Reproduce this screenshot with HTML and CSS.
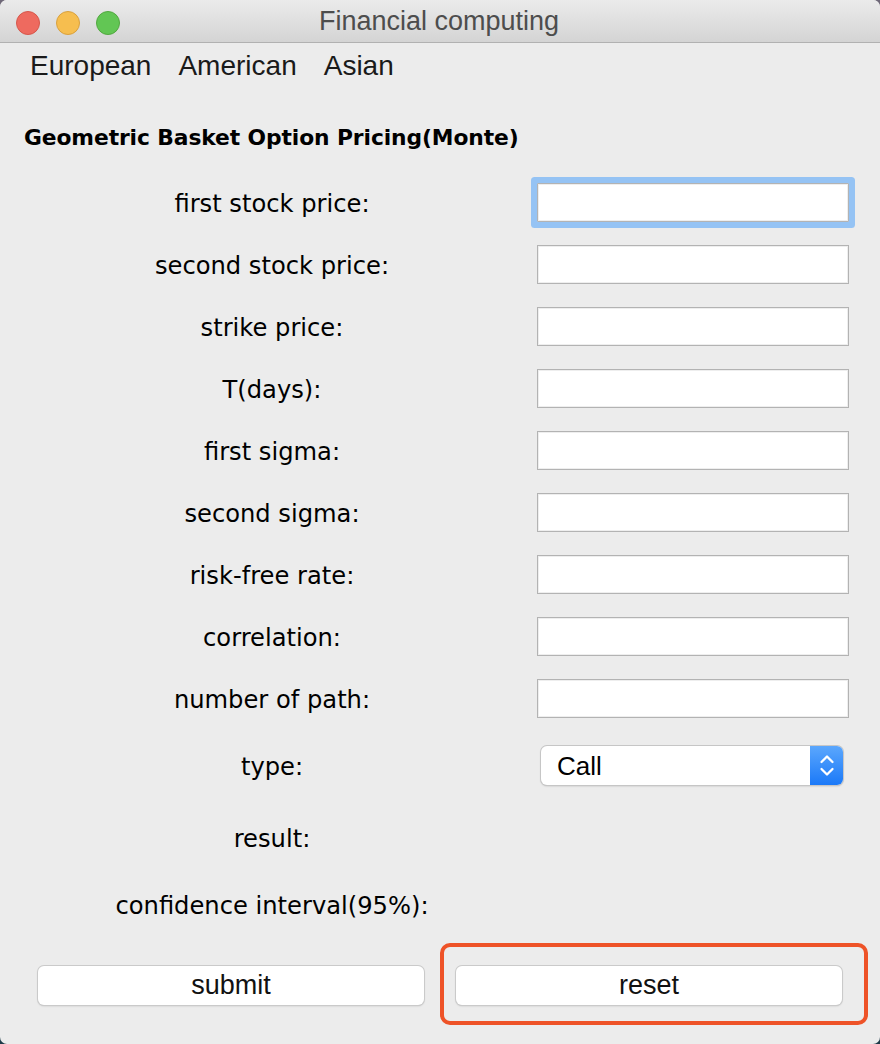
FILE: index.html
```html
<!DOCTYPE html>
<html>
<head>
<meta charset="utf-8">
<title>Financial computing</title>
<link rel="stylesheet" href="styles.css">
</head>
<body>
<div class="window">
  <div class="titlebar">
    <div class="lights">
      <span class="light red"></span>
      <span class="light yellow"></span>
      <span class="light green"></span>
    </div>
    <div class="title">Financial computing</div>
  </div>
  <div class="menubar">
    <span class="menu-item">European</span>
    <span class="menu-item">American</span>
    <span class="menu-item">Asian</span>
  </div>
  <h1 class="heading">Geometric Basket Option Pricing(Monte)</h1>
  <div class="form">
    <div class="row"><label class="label">first stock price:</label><div class="field focus"></div></div>
    <div class="row"><label class="label">second stock price:</label><div class="field"></div></div>
    <div class="row"><label class="label">strike price:</label><div class="field"></div></div>
    <div class="row"><label class="label">T(days):</label><div class="field"></div></div>
    <div class="row"><label class="label">first sigma:</label><div class="field"></div></div>
    <div class="row"><label class="label">second sigma:</label><div class="field"></div></div>
    <div class="row"><label class="label">risk-free rate:</label><div class="field"></div></div>
    <div class="row"><label class="label">correlation:</label><div class="field"></div></div>
    <div class="row"><label class="label">number of path:</label><div class="field"></div></div>
    <div class="row row-type"><label class="label">type:</label>
      <div class="select">
        <span class="select-text">Call</span>
        <span class="select-arrows">
          <svg width="18" height="28" viewBox="0 0 18 28"><path d="M3.5 10 L9 4.5 L14.5 10" fill="none" stroke="#fff" stroke-width="2.3" stroke-linecap="round" stroke-linejoin="round"/><path d="M3.5 17 L9 22.5 L14.5 17" fill="none" stroke="#fff" stroke-width="2.3" stroke-linecap="round" stroke-linejoin="round"/></svg>
        </span>
      </div>
    </div>
    <div class="row row-result"><label class="label">result:</label><div class="value"></div></div>
    <div class="row row-conf"><label class="label">confidence interval(95%):</label><div class="value"></div></div>
  </div>
  <div class="buttons">
    <button class="btn">submit</button>
    <button class="btn">reset</button>
  </div>
  <div class="annotation"></div>
</div>
</body>
</html>
```
FILE: styles.css
```css
html, body {
  margin: 0;
  padding: 0;
}
body {
  width: 880px;
  height: 1044px;
  background: linear-gradient(#6f6878 0%, #6f6878 50%, #1d3a48 50%, #1d3a48 100%);
  overflow: hidden;
}
.window {
  position: relative;
  width: 880px;
  height: 1044px;
  background: #ececec;
  border-radius: 7px;
  overflow: hidden;
  font-family: "Liberation Sans", Arial, sans-serif;
  color: #000;
}
.titlebar {
  position: relative;
  height: 42px;
  background: linear-gradient(#ebebeb, #d4d4d4);
  border-bottom: 1px solid #b1b1b1;
  display: flex;
  align-items: center;
  justify-content: center;
}
.lights {
  position: absolute;
  left: 16px;
  top: 11px;
  display: flex;
  gap: 16px;
}
.light {
  width: 22px;
  height: 22px;
  border-radius: 50%;
  display: block;
}
.red { background: #ee6a5f; border: 1px solid #d6574b; }
.yellow { background: #f6be4f; border: 1px solid #d9a13e; }
.green { background: #62c654; border: 1px solid #52a840; }
.title {
  font-size: 27px;
  color: #4d4d4d;
  margin-left: -2px;
  margin-top: 1px;
}
.menubar {
  display: flex;
  gap: 27px;
  padding-left: 30px;
  height: 46px;
  align-items: center;
}
.menu-item {
  font-size: 28px;
  color: #1a1a1a;
}
.heading {
  margin: 0;
  padding-left: 24px;
  margin-top: 34px;
  height: 30px;
  line-height: 30px;
  font-family: "DejaVu Sans", sans-serif;
  font-weight: bold;
  font-size: 21.8px;
  letter-spacing: -0.1px;
}
.form {
  margin-top: 30px;
  padding-left: 24px;
  display: flex;
  flex-direction: column;
  gap: 23px;
}
.row {
  display: flex;
  align-items: center;
  height: 39px;
}
.label {
  width: 496px;
  padding-top: 3px;
  text-align: center;
  font-family: "DejaVu Sans", sans-serif;
  font-size: 24.2px;
  color: #000;
}
.field {
  margin-left: 17px;
  width: 312px;
  height: 39px;
  box-sizing: border-box;
  background: #fff;
  border: 1px solid #b3b3b3;
  box-shadow: inset 0 0 0 1px #eeeeee;
}
.field.focus {
  border-radius: 1px;
  box-shadow: inset 0 0 0 1px #eeeeee, 0 0 0 6px #95c3f4;
}
.row-type {
  margin-top: 5px;
}
.select {
  margin-left: 21px;
  width: 302px;
  height: 39px;
  box-sizing: border-box;
  border-radius: 6px;
  background: #fff;
  box-shadow: 0 0 0 1px #c6c6c6, 0 1px 2px rgba(0,0,0,0.25);
  display: flex;
  overflow: hidden;
}
.select-text {
  flex: 1;
  padding-left: 16px;
  font-size: 26px;
  line-height: 40px;
}
.select-arrows {
  width: 33px;
  background: linear-gradient(#5ba7fd, #1b79f8);
  display: flex;
  align-items: center;
  justify-content: center;
}
.row-result {
  margin-top: 10px;
}
.row-conf {
  margin-top: 5px;
}
.value {
  margin-left: 17px;
  width: 312px;
}
.buttons {
  margin-top: 42px;
  padding-left: 38px;
  display: flex;
  gap: 32px;
}
.btn {
  width: 386px;
  height: 39px;
  box-sizing: border-box;
  background: #fff;
  border: none;
  border-radius: 6px;
  box-shadow: 0 0 0 1px #cacaca, 0 1px 2px rgba(0,0,0,0.22);
  font-family: "Liberation Sans", Arial, sans-serif;
  font-size: 27px;
  color: #111;
  padding: 0;
}
.annotation {
  position: absolute;
  left: 440px;
  top: 943px;
  width: 428px;
  height: 82px;
  box-sizing: border-box;
  border: 4px solid #ee5328;
  border-radius: 10px;
}
```
